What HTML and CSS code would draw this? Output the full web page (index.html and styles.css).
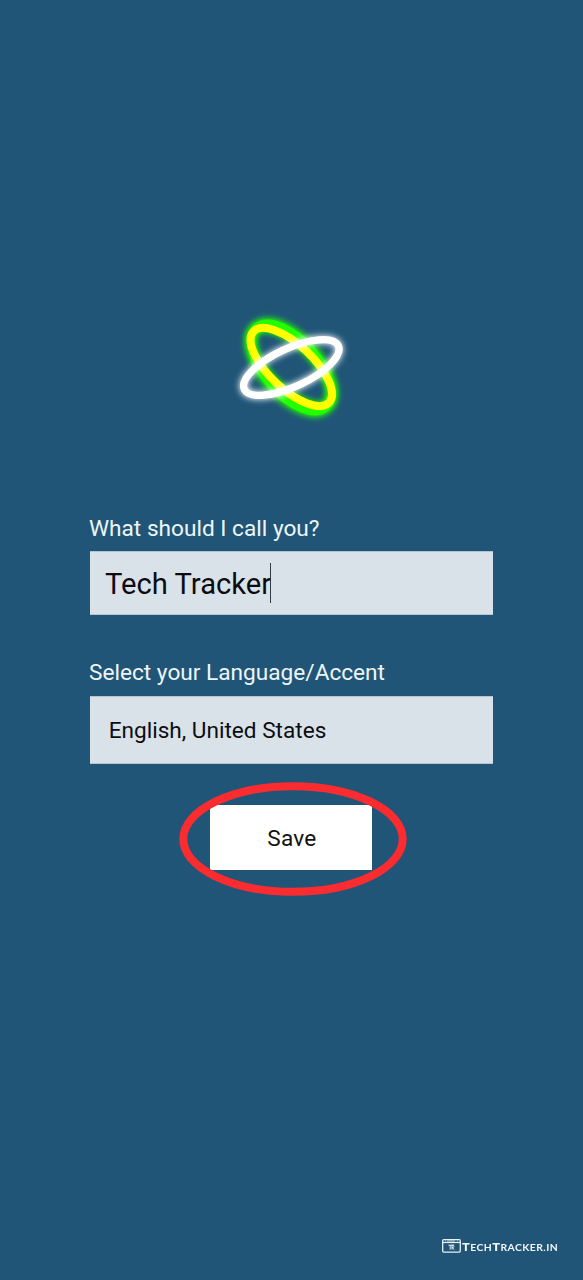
FILE: index.html
```html
<!DOCTYPE html>
<html lang="en">
<head>
<meta charset="utf-8">
<title>Setup</title>
<link rel="stylesheet" href="styles.css">
</head>
<body>
<main class="screen">
  <svg class="logo" width="132" height="125" viewBox="0 0 132 125" fill="none">
    <defs>
      <filter id="glow" x="-30%" y="-50%" width="160%" height="200%"><feGaussianBlur stdDeviation="3"/></filter>
      <filter id="soft" x="-30%" y="-30%" width="160%" height="160%"><feGaussianBlur stdDeviation=".7"/></filter>
    </defs>
    <g stroke="#22ff00">
      <ellipse cx="65.3" cy="62.5" rx="53" ry="27" transform="rotate(49 65.3 62.5)" stroke-width="11" filter="url(#glow)"/>
      <ellipse cx="65.3" cy="62" rx="51.9" ry="22" transform="rotate(43.3 65.3 62)" stroke-width="8" filter="url(#glow)"/>
      <ellipse cx="65.3" cy="62.5" rx="53" ry="27" transform="rotate(49 65.3 62.5)" stroke-width="8" filter="url(#soft)"/>
    </g>
    <ellipse cx="65.3" cy="62" rx="51.9" ry="22" transform="rotate(43.3 65.3 62)" stroke="#ffff00" stroke-width="8"/>
    <g stroke="#ffffff">
      <ellipse cx="65.3" cy="62.5" rx="51.8" ry="19.2" transform="rotate(-24.8 65.3 62.5)" stroke-width="8" filter="url(#glow)"/>
      <ellipse cx="65.3" cy="62.5" rx="51.8" ry="19.2" transform="rotate(-24.8 65.3 62.5)" stroke-width="7.3"/>
    </g>
  </svg>
  <form class="form">
    <div class="label">What should I call you?</div>
    <div class="field name"><span>Tech Tracker</span><i class="caret"></i></div>
    <div class="label second">Select your Language/Accent</div>
    <div class="field language">English, United States</div>
    <div class="action">
      <div class="save">Save</div>
      <svg class="ring" width="230" height="116" viewBox="0 0 230 116" fill="none"><ellipse cx="115" cy="58" rx="109.7" ry="52.8" stroke="#fb2c30" stroke-width="8"/></svg>
    </div>
  </form>
  <footer class="brand">
    <svg width="19" height="14" viewBox="0 0 19 14" fill="none" stroke="#e8f1f6">
      <rect x=".7" y=".7" width="17.6" height="12.4" rx="1" stroke-width="1.3"/>
      <path d="M1 3.5h17" stroke-width="1.2"/>
      <path d="M3 2h1M5 2h8M15 2h1" stroke-width=".8"/>
      <path d="M6.5 6.2H12M8.2 6.2v4.3M10 10.5V6.3h1.3q1.2 1.1 0 2.2H10l2.3 2" stroke-width="1"/>
    </svg>
    <span class="wordmark"><b>T</b>ECH<b>T</b>RACKER.IN</span>
  </footer>
</main>
</body>
</html>
```
FILE: styles.css
```css
body {
  margin: 0;
  background: #205577;
  font-family: Roboto, sans-serif;
}
.screen {
  box-sizing: border-box;
  height: 1280px;
  padding-top: 305px;
  display: flex;
  flex-direction: column;
}
.logo {
  margin-left: 226px;
  flex: none;
}
.form {
  width: 403px;
  margin: 83px 0 0 90px;
}
.label {
  box-sizing: border-box;
  height: 38px;
  padding-top: 1px;
  line-height: 30px;
  margin-left: -1px;
  font-size: 22.65px;
  color: #eef5f8;
  white-space: nowrap;
}
.second {
  margin-top: 43px;
  padding-top: 0;
}
.field {
  display: flex;
  align-items: center;
  box-sizing: border-box;
  background: #dae2e9;
  color: #0b0d12;
  border: solid #b4c5d1;
  border-width: 1px 0;
  white-space: nowrap;
}
.name {
  height: 64px;
  padding-left: 15px;
  font-size: 29.2px;
}
.name span {
  padding-top: 2px;
}
.caret {
  width: 1px;
  height: 40px;
  margin-left: -1px;
  background: #333d45;
}
.language {
  height: 68px;
  padding-left: 18.7px;
  font-size: 22.6px;
}
.action {
  position: relative;
  margin-top: 41px;
  padding-left: 120.4px;
}
.save {
  display: flex;
  align-items: center;
  justify-content: center;
  box-sizing: border-box;
  width: 162px;
  height: 65px;
  padding: 1px 0 0 1px;
  background: #fff;
  color: #111;
  font-size: 22.6px;
  letter-spacing: .2px;
}
.ring {
  position: absolute;
  left: 88.3px;
  top: -24.5px;
}
.brand {
  display: flex;
  align-items: center;
  gap: 1px;
  height: 16px;
  margin: auto 26px 26px auto;
}
.wordmark {
  width: 95px;
  color: #f0f6fa;
  font: 700 9.3px/16px Lato, sans-serif;
  letter-spacing: .4px;
  padding-top: 2px;
  transform: scaleX(1.115);
  transform-origin: left;
  white-space: nowrap;
}
.wordmark b {
  font-size: 11.5px;
}
```
